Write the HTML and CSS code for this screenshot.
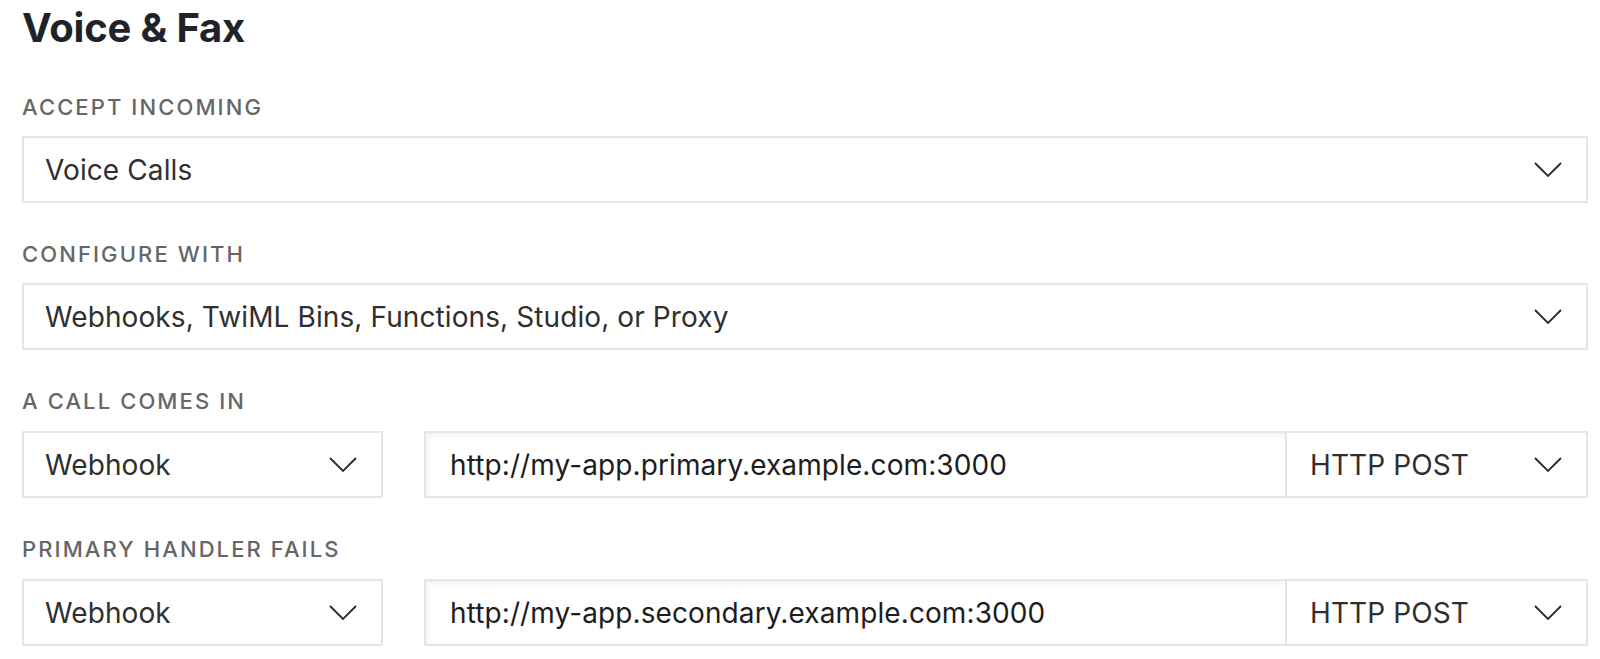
FILE: index.html
```html
<!DOCTYPE html>
<html lang="en">
<head>
    <meta charset="UTF-8">
    <title>Voice &amp; Fax</title>
    <link rel="stylesheet" href="styles.css">
</head>
<body>
    <section class="settings">
        <h1>Voice &amp; Fax</h1>

        <div class="field">
            <label>Accept Incoming</label>
            <div class="select">
                <span>Voice Calls</span>
                <svg class="chevron" viewBox="0 0 28 16"><path d="M1 1l13 13L27 1"/></svg>
            </div>
        </div>

        <div class="field">
            <label>Configure With</label>
            <div class="select">
                <span>Webhooks, TwiML Bins, Functions, Studio, or Proxy</span>
                <svg class="chevron" viewBox="0 0 28 16"><path d="M1 1l13 13L27 1"/></svg>
            </div>
        </div>

        <div class="field handler">
            <label>A Call Comes In</label>
            <div class="handler-row">
                <div class="select">
                    <span>Webhook</span>
                    <svg class="chevron" viewBox="0 0 28 16"><path d="M1 1l13 13L27 1"/></svg>
                </div>
                <div class="url-group">
                    <div class="url-input">http://my-app.primary.example.com:3000</div>
                    <div class="select method">
                        <span>HTTP POST</span>
                        <svg class="chevron" viewBox="0 0 28 16"><path d="M1 1l13 13L27 1"/></svg>
                    </div>
                </div>
            </div>
        </div>

        <div class="field handler">
            <label>Primary Handler Fails</label>
            <div class="handler-row">
                <div class="select">
                    <span>Webhook</span>
                    <svg class="chevron" viewBox="0 0 28 16"><path d="M1 1l13 13L27 1"/></svg>
                </div>
                <div class="url-group">
                    <div class="url-input">http://my-app.secondary.example.com:3000</div>
                    <div class="select method">
                        <span>HTTP POST</span>
                        <svg class="chevron" viewBox="0 0 28 16"><path d="M1 1l13 13L27 1"/></svg>
                    </div>
                </div>
            </div>
        </div>
    </section>
</body>
</html>
```

FILE: styles.css
```css
/* VARIABLES */

:root {
    --ink: #1f2329;
    --text: #2f2f2f;
    --muted: #666666;
    --border: #e6e6e6;
}

/* TYPOGRAPHY */

html {
    font-family: "Inter", "Open Sans", sans-serif;
    color: var(--text);
}

body {
    margin: 0;
    background: #fff;
}

h1 {
    font-size: 40px;
    font-weight: 700;
    line-height: 48px;
    letter-spacing: -0.2px;
    color: var(--ink);
    margin: 0 0 43px;
}

label {
    display: block;
    font-size: 22px;
    font-weight: 500;
    line-height: 24px;
    letter-spacing: 2.1px;
    text-transform: uppercase;
    color: var(--muted);
    margin-bottom: 17px;
}

.handler label {
    margin-bottom: 18px;
}

/* LAYOUT */

.settings {
    width: 1566px;
    padding: 4px 0 0 22px;
    display: flex;
    flex-direction: column;
}

.field {
    margin-bottom: 39px;
}

.handler-row {
    display: grid;
    grid-template-columns: 361px 1fr;
    gap: 41px;
}

.url-group {
    display: grid;
    grid-template-columns: 1fr 302px;
}

/* CONTROLS */

.select, .url-input {
    box-sizing: border-box;
    height: 67px;
    border: 2px solid var(--border);
    background: #fff;
    font-size: 28px;
    letter-spacing: 0.1px;
    display: flex;
    align-items: center;
}

.select {
    justify-content: space-between;
    padding: 0 24px 0 21px;
}

.method {
    border-left-width: 1px;
    padding-left: 23px;
}

.url-input {
    padding: 0 24px;
    color: #1d1d1d;
    border-right-width: 1px;
    box-shadow: inset 2px 3px 4px rgba(0, 0, 0, 0.05);
}

.chevron {
    width: 28px;
    height: 16px;
    fill: none;
    stroke: #2b2b2b;
    stroke-width: 1.8;
}
```
